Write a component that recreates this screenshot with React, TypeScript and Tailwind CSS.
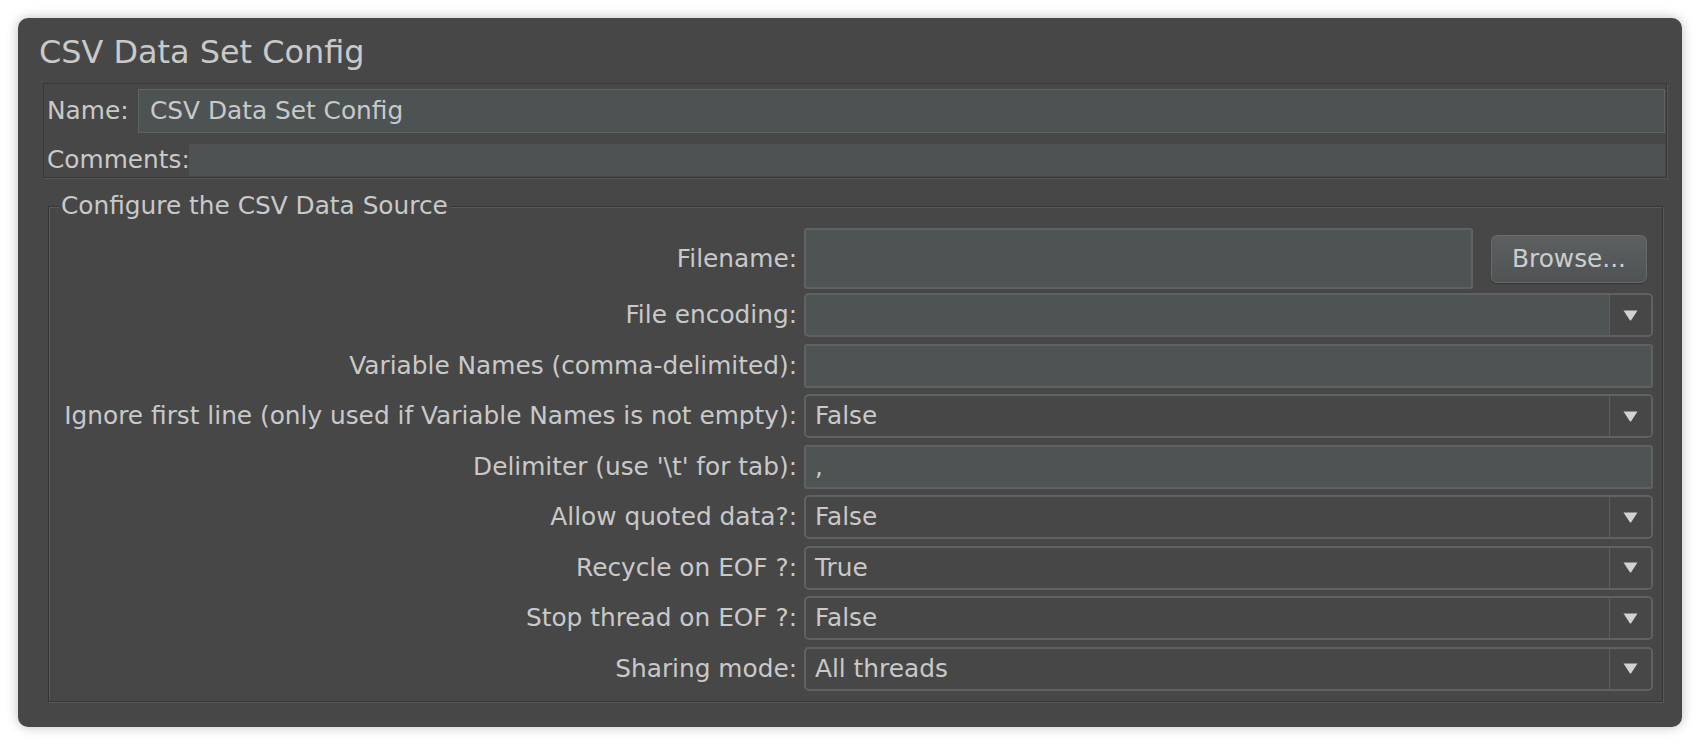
import React from 'react';

type Row = { label: string; kind: 'text' | 'combo' | 'edit'; value?: string };

const rows: Row[] = [
  { label: 'File encoding:', kind: 'edit' },
  { label: 'Variable Names (comma-delimited):', kind: 'text' },
  { label: 'Ignore first line (only used if Variable Names is not empty):', kind: 'combo', value: 'False' },
  { label: "Delimiter (use '\\t' for tab):", kind: 'text', value: ',' },
  { label: 'Allow quoted data?:', kind: 'combo', value: 'False' },
  { label: 'Recycle on EOF ?:', kind: 'combo', value: 'True' },
  { label: 'Stop thread on EOF ?:', kind: 'combo', value: 'False' },
  { label: 'Sharing mode:', kind: 'combo', value: 'All threads' },
];

const Arrow = () => (
  <svg width="15" height="11" viewBox="0 0 15 11">
    <path d="M0.5 0.5h14L8.3 10a1 1 0 0 1-1.6 0z" fill="#d2d2d2" />
  </svg>
);

function Field({ row }: { row: Row }) {
  if (row.kind === 'text') {
    return (
      <div className="h-full border-2 border-[#5e6263] rounded-[3px] bg-[#4e5354] pl-[9px] flex items-center">
        {row.value}
      </div>
    );
  }
  return (
    <div className={`h-full border-2 border-[#5e6263] rounded-[5px] flex overflow-hidden ${row.kind === 'edit' ? 'bg-[#4e5354]' : 'bg-[#474747]'}`}>
      <div className="flex-1 pl-[9px] flex items-center">{row.value}</div>
      <div className="w-[42px] border-l border-[#5a5e5f] bg-[#474747] flex items-center justify-center">
        <Arrow />
      </div>
    </div>
  );
}

export default function App() {
  return (
    <div className="min-h-screen bg-white pt-[18px] px-[18px] [font-family:'DejaVu_Sans',sans-serif] text-[#c9c9c9] text-[24.8px]">
      <div className="h-[709px] rounded-[10px] bg-[#474747] shadow-[0_0_12px_rgba(0,0,0,0.25)] pl-[21px] pr-[15px] pt-[15px]">
        <h1 className="text-[31.9px] leading-[38px] font-normal">CSV Data Set Config</h1>

        {/* Name / comments */}
        <div className="mt-[12px] ml-[4px] h-[95px] border border-[#383838] shadow-[1px_1px_0_#555] pl-[3px] pr-[1px] pt-[5px]">
          <div className="flex items-center h-[44px]">
            <span className="w-[91px] shrink-0">Name:</span>
            <div className="flex-1 h-full border border-[#5f6364] bg-[#4d5253] pl-[11px] flex items-center">CSV Data Set Config</div>
          </div>
          <div className="mt-[11px] flex items-center h-[32px]">
            <span className="w-[142px] shrink-0">Comments:</span>
            <div className="flex-1 h-full bg-[#4d5253]" />
          </div>
        </div>

        {/* CSV data source */}
        <fieldset className="mt-[14px] ml-[9px] mr-[4px] border border-[#363636] shadow-[1px_1px_0_#595959,inset_1px_1px_0_#595959] pr-[9px] pt-[8px] pb-[10px]">
          <legend className="ml-[10px] px-[2px] bg-[#474747] leading-[28px]">Configure the CSV Data Source</legend>

          <div className="grid grid-cols-[748px_1fr] gap-x-[7px] items-center h-[61px]">
            <span className="text-right whitespace-nowrap">Filename:</span>
            <div className="flex items-center h-full">
              <div className="w-[669px] h-full border-2 border-[#5e6263] rounded-[3px] bg-[#4e5354]" />
              <button className="ml-[18px] w-[156px] h-[48px] rounded-[6px] border border-[#676b6c] bg-gradient-to-b from-[#5c6061] to-[#4f5354] text-[#cdcdcd] shadow-[0_1px_1px_rgba(0,0,0,0.3)]">
                Browse...
              </button>
            </div>
          </div>

          <div className="mt-[4px] flex flex-col gap-[6.5px]">
            {rows.map(r => (
              <div key={r.label} className="grid grid-cols-[748px_1fr] gap-x-[7px] items-center h-[44px]">
                <span className="text-right whitespace-nowrap">{r.label}</span>
                <Field row={r} />
              </div>
            ))}
          </div>
        </fieldset>
      </div>
    </div>
  );
}
